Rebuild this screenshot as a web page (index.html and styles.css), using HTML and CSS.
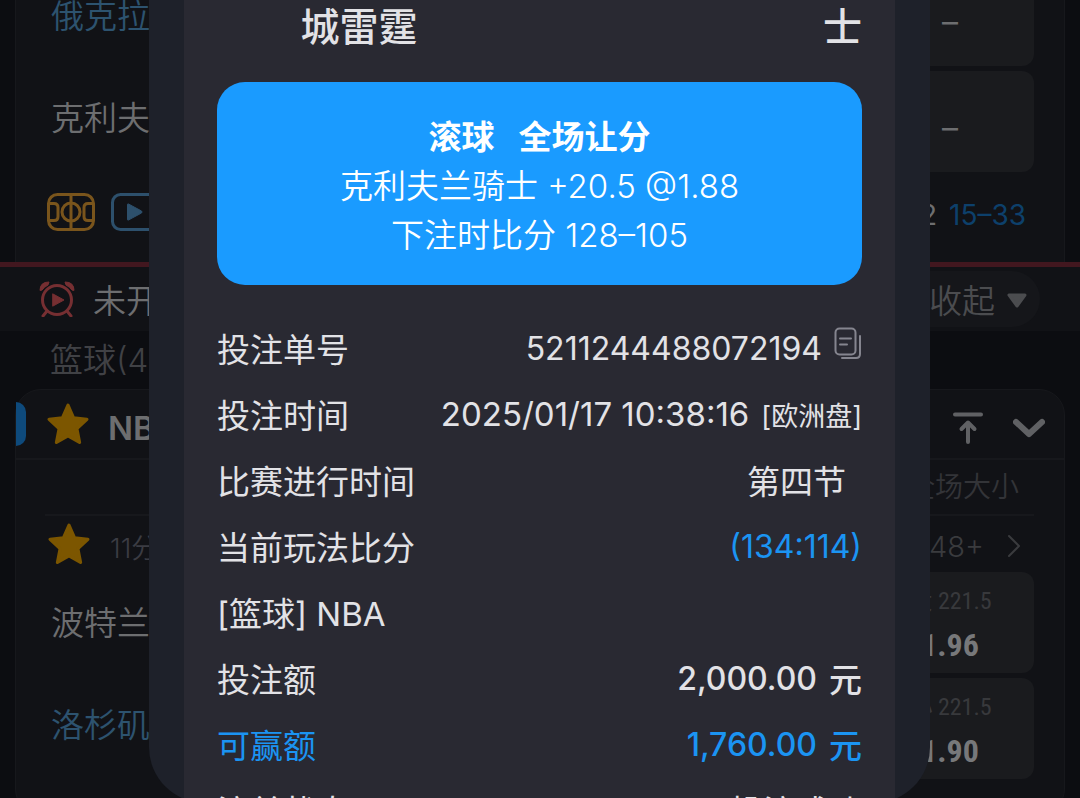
FILE: index.html
```html
<!DOCTYPE html>
<html lang="zh-CN">
<head>
  <meta charset="UTF-8">
  <meta name="viewport" content="width=device-width, initial-scale=1">
  <title>投注详情</title>
  <link rel="stylesheet" href="styles.css">
</head>
<body>
  <div class="app">
    <main class="page">
      <section class="board board-live">
        <div class="lines">
          <div class="names">
            <p class="away">俄克拉</p>
            <p>克利夫</p>
          </div>
          <div class="prices">
            <button class="odds"><span class="dash">–</span></button>
            <button class="odds"><span class="dash">–</span></button>
          </div>
        </div>
        <div class="board-foot">
          <svg class="icon-wide court" viewBox="0 0 48 38">
            <rect x="1.5" y="1.5" width="45" height="35" rx="9"/>
            <path d="M24 1.5v35M2 10.500h5q4 0 4 4v9q0 4-4 4h-5M46 10.500h-5q-4 0-4 4v9q0 4 4 4h5"/>
            <circle cx="24" cy="19" r="9"/>
          </svg>
          <svg class="icon-wide video" viewBox="0 0 48 38">
            <rect x="1.500" y="1.500" width="45" height="35" rx="8"/>
            <path class="solid" d="M16.500 11.500q0-1 1-.5l13 7q1 1 0 2l-13 7q-1 .5-1-.5z"/>
          </svg>
          <span class="score">2 <em>15–33</em></span>
        </div>
      </section>

      <header class="group-bar">
        <svg class="icon-clock" viewBox="0 0 36 36">
          <circle cx="18" cy="19" r="14.500"/>
          <path d="M8 30l-4 5M28 30l4 5"/>
          <path class="solid" d="M1 9q0-8 9-8l-1 3q-4 2-6 5zM35 9q0-8-9-8l1 3q4 2 6 5zM14 13l11 6-11 6z"/>
        </svg>
        <h2>未开</h2>
        <button class="fold">收起
          <svg viewBox="0 0 20 16"><path d="M2 2h16l-8 11z"/></svg>
        </button>
      </header>
      <h3 class="sport">篮球(4)</h3>

      <section class="board board-next">
        <div class="league">
          <i class="league-mark"></i>
          <button class="star" aria-label="收藏联赛">
            <svg viewBox="0 0 40 40"><path d="M20 2l5.300 12.200L38 15.500l-9.500 9L31 37.500 20 31.200 9 37.500l2.500-13L2 15.500l12.700-1.300z"/></svg>
          </button>
          <strong>NBA</strong>
          <button class="tool" aria-label="置顶">
            <svg viewBox="0 0 32 32"><path d="M3 2.500h26M16 30V11M9.500 17L16 10.500l6.500 6.500"/></svg>
          </button>
          <button class="tool tool-down" aria-label="展开">
            <svg viewBox="0 0 32 32"><path d="M3 10l13 12 13-12"/></svg>
          </button>
        </div>
        <div class="market">全场大小</div>
        <div class="match">
          <button class="star" aria-label="收藏比赛">
            <svg viewBox="0 0 40 40"><path d="M20 2l5.300 12.200L38 15.500l-9.500 9L31 37.500 20 31.200 9 37.500l2.500-13L2 15.500l12.700-1.300z"/></svg>
          </button>
          <span class="clock">11分</span>
          <a class="more" href="#">48+
            <svg viewBox="0 0 12 24"><path d="M1 2l10 10L1 22"/></svg>
          </a>
        </div>
        <div class="lines">
          <div class="names">
            <p>波特兰</p>
            <p class="away">洛杉矶</p>
          </div>
          <div class="prices">
            <button class="odds"><small>大 221.5</small><b>1.96</b></button>
            <button class="odds"><small>小 221.5</small><b>1.90</b></button>
          </div>
        </div>
      </section>
    </main>

    <div class="overlay">
      <div class="dialog" role="dialog" aria-label="投注详情">
        <div class="dialog-body">
          <div class="teams">
            <span>城雷霆</span>
            <span class="home">士</span>
          </div>
          <div class="pick">
            <h1><span>滚球</span><span>全场让分</span></h1>
            <p>克利夫兰骑士 +20.5 @1.88</p>
            <p>下注时比分 128–105</p>
          </div>
          <dl class="detail">
            <div>
              <dt>投注单号</dt>
              <dd><span class="num">5211244488072194</span>
                <button class="copy" aria-label="复制">
                  <svg viewBox="0 0 28 34"><rect x="1.500" y="1.500" width="20" height="26" rx="4"/><path d="M6 11.500h11M6 17.500h7M26 9v18q0 4-4 4H8"/></svg>
                </button>
              </dd>
            </div>
            <div>
              <dt>投注时间</dt>
              <dd>2025/01/17 10:38:16 <small>[欧洲盘]</small></dd>
            </div>
            <div>
              <dt>比赛进行时间</dt>
              <dd class="period">第四节</dd>
            </div>
            <div>
              <dt>当前玩法比分</dt>
              <dd class="num blue">(134:114)</dd>
            </div>
            <div>
              <dt>[篮球] NBA</dt>
            </div>
            <div>
              <dt>投注额</dt>
              <dd class="money"><span class="num">2,000.00</span> 元</dd>
            </div>
            <div class="blue">
              <dt>可赢额</dt>
              <dd class="money"><span class="num">1,760.00</span> 元</dd>
            </div>
            <div>
              <dt>注单状态</dt>
              <dd>投注成功</dd>
            </div>
          </dl>
        </div>
      </div>
    </div>
  </div>
</body>
</html>
```

FILE: styles.css
```css
/* Reset */
* { margin: 0; padding: 0; box-sizing: border-box; }
body {
  font-family: Inter, "Noto Sans CJK SC", sans-serif;
  font-size: 33px;
  color: #6d6e70;
  background: #0c0d11;
}
button {
  font: inherit;
  color: inherit;
  background: none;
  border: 0;
}
a { color: inherit; text-decoration: none; }
svg {
  display: block;
  fill: none;
  stroke: currentColor;
  stroke-width: 3;
  stroke-linecap: round;
  stroke-linejoin: round;
}
.solid { fill: currentColor; stroke-width: 1; }
.app {
  position: relative;
  height: 100vh;
  overflow: hidden;
}

/* Match list */
.page { white-space: nowrap; }
.board {
  margin: 0 15px;
  background: #111216;
  border: 1px solid #17181c;
}
.board-live {
  margin-top: -36px;
  border-bottom: 0;
}
.lines {
  display: grid;
  grid-template-columns: 1fr 168px;
  padding: 0 30px 5px 35px;
}
.names {
  font-weight: 350;
  line-height: 102px;
}
.away { color: #2d536f; }
.prices {
  display: grid;
  gap: 5px;
}
.odds {
  display: flex;
  flex-direction: column;
  align-items: center;
  justify-content: center;
  height: 101px;
  border-radius: 12px;
  background: #1a1b1e;
  font-family: "Roboto Condensed", Roboto, "Noto Sans CJK SC", sans-serif;
}
.odds small {
  font-size: 24px;
  line-height: 44px;
  color: #38393c;
}
.odds b {
  font-size: 32px;
  line-height: 44px;
  color: #77787a;
}
.odds .dash {
  padding-top: 12px;
  font-family: Inter, sans-serif;
  font-size: 32px;
}
.board-foot {
  display: flex;
  align-items: center;
  gap: 16px;
  height: 85px;
  padding: 0 38px 16px 31px;
}
.icon-wide { width: 48px; height: 38px; }
.court { color: #7a551c; }
.video { color: #2d506c; }
.score {
  margin-left: auto;
  padding-top: 6px;
  font-size: 28px;
}
.score em {
  margin-left: 4px;
  font-style: normal;
  color: #0d406b;
}

.group-bar {
  display: flex;
  align-items: center;
  height: 69px;
  padding: 0 40px 0 39px;
  border-top: 5px solid #42171f;
  background: #111216;
}
.icon-clock {
  width: 36px;
  height: 36px;
  margin-right: 18px;
  color: #762f32;
}
.group-bar h2 {
  font-size: 33px;
  font-weight: 350;
}
.fold {
  display: flex;
  align-items: center;
  gap: 12px;
  height: 56px;
  margin-left: auto;
  padding: 0 13px 0 30px;
  border-radius: 28px;
  background: #15161a;
  color: #4b4c4f;
  font-weight: 350;
}
.fold svg {
  width: 20px;
  height: 16px;
  margin-top: 4px;
  fill: currentColor;
}
.sport {
  padding-left: 50px;
  font-size: 33px;
  font-weight: 350;
  line-height: 58px;
  color: #404145;
}

.board-next {
  padding-bottom: 30px;
  border-radius: 26px;
}
.league {
  display: flex;
  align-items: center;
  height: 70px;
  padding-right: 19px;
  border-bottom: 2px solid #17181c;
}
.league-mark {
  width: 10px;
  height: 44px;
  border-radius: 0 10px 10px 0;
  background: #0e4a7c;
}
.star {
  width: 42px;
  height: 42px;
  margin-left: 21px;
  color: #7c5600;
}
.star svg { fill: currentColor; }
.league strong {
  margin-top: 8px;
  margin-left: 19px;
  font-size: 33px;
  font-weight: 600;
}
.tool {
  width: 32px;
  height: 32px;
  margin-top: 8px;
  margin-left: auto;
  color: #606164;
}
.tool svg { stroke-width: 4; }
.tool-down { margin-left: 29px; }
.tool-down svg { stroke-width: 6; }
.market {
  height: 56px;
  margin: 0 30px 0 29px;
  padding-right: 15px;
  border-bottom: 2px solid #17181c;
  font-size: 28px;
  font-weight: 350;
  line-height: 54px;
  text-align: right;
  color: #333438;
}
.match {
  display: flex;
  align-items: center;
  height: 56px;
  padding: 0 44px 0 11px;
  font-size: 27px;
  font-weight: 350;
  color: #3b3c43;
}
.clock,
.more { padding-top: 4px; }
.clock { margin-left: 20px; }
.more {
  display: flex;
  align-items: center;
  gap: 24px;
  margin-left: auto;
  font-size: 29px;
  color: #3a3b3e;
}
.more svg { width: 12px; height: 24px; stroke-width: 2; }

/* Bet detail dialog */
.overlay {
  position: absolute;
  inset: 0 0 -5px;
  padding: 0 150px 0 149px;
}
.dialog {
  height: 100%;
  padding: 0 35px;
  border-radius: 0 0 56px 56px;
  background: #1e212a;
  overflow: hidden;
  color: #e2e2e6;
}
.dialog-body {
  padding: 0 33px;
  background: #292932;
}
.teams {
  display: grid;
  grid-template-columns: 44% 1fr;
  height: 82px;
  font-size: 39px;
  font-weight: 500;
  line-height: 54px;
  text-align: center;
}
.teams .home { text-align: right; }
.pick {
  padding: 31px 20px 25px;
  border-radius: 28px;
  background: #1a9bff;
  color: #fff;
  text-align: center;
}
.pick h1 {
  display: flex;
  justify-content: center;
  gap: 24px;
  font-size: 33px;
  font-weight: 700;
  line-height: 49px;
}
.pick p {
  font-weight: 350;
  line-height: 49px;
}
.detail { padding-top: 30px; }
.detail div {
  display: flex;
  align-items: center;
  justify-content: space-between;
  height: 66px;
}
.detail dd {
  display: flex;
  align-items: center;
  gap: 12px;
}
.detail small { font-size: 27px; }
.num { font-size: 32px; }
.detail .period { padding-right: 16px; }
.blue { color: #1b94f2; }
.money { font-weight: 500; }
.copy {
  width: 28px;
  height: 34px;
  margin-bottom: 8px;
  color: #85858f;
}
.copy svg { stroke-width: 2; }
```
